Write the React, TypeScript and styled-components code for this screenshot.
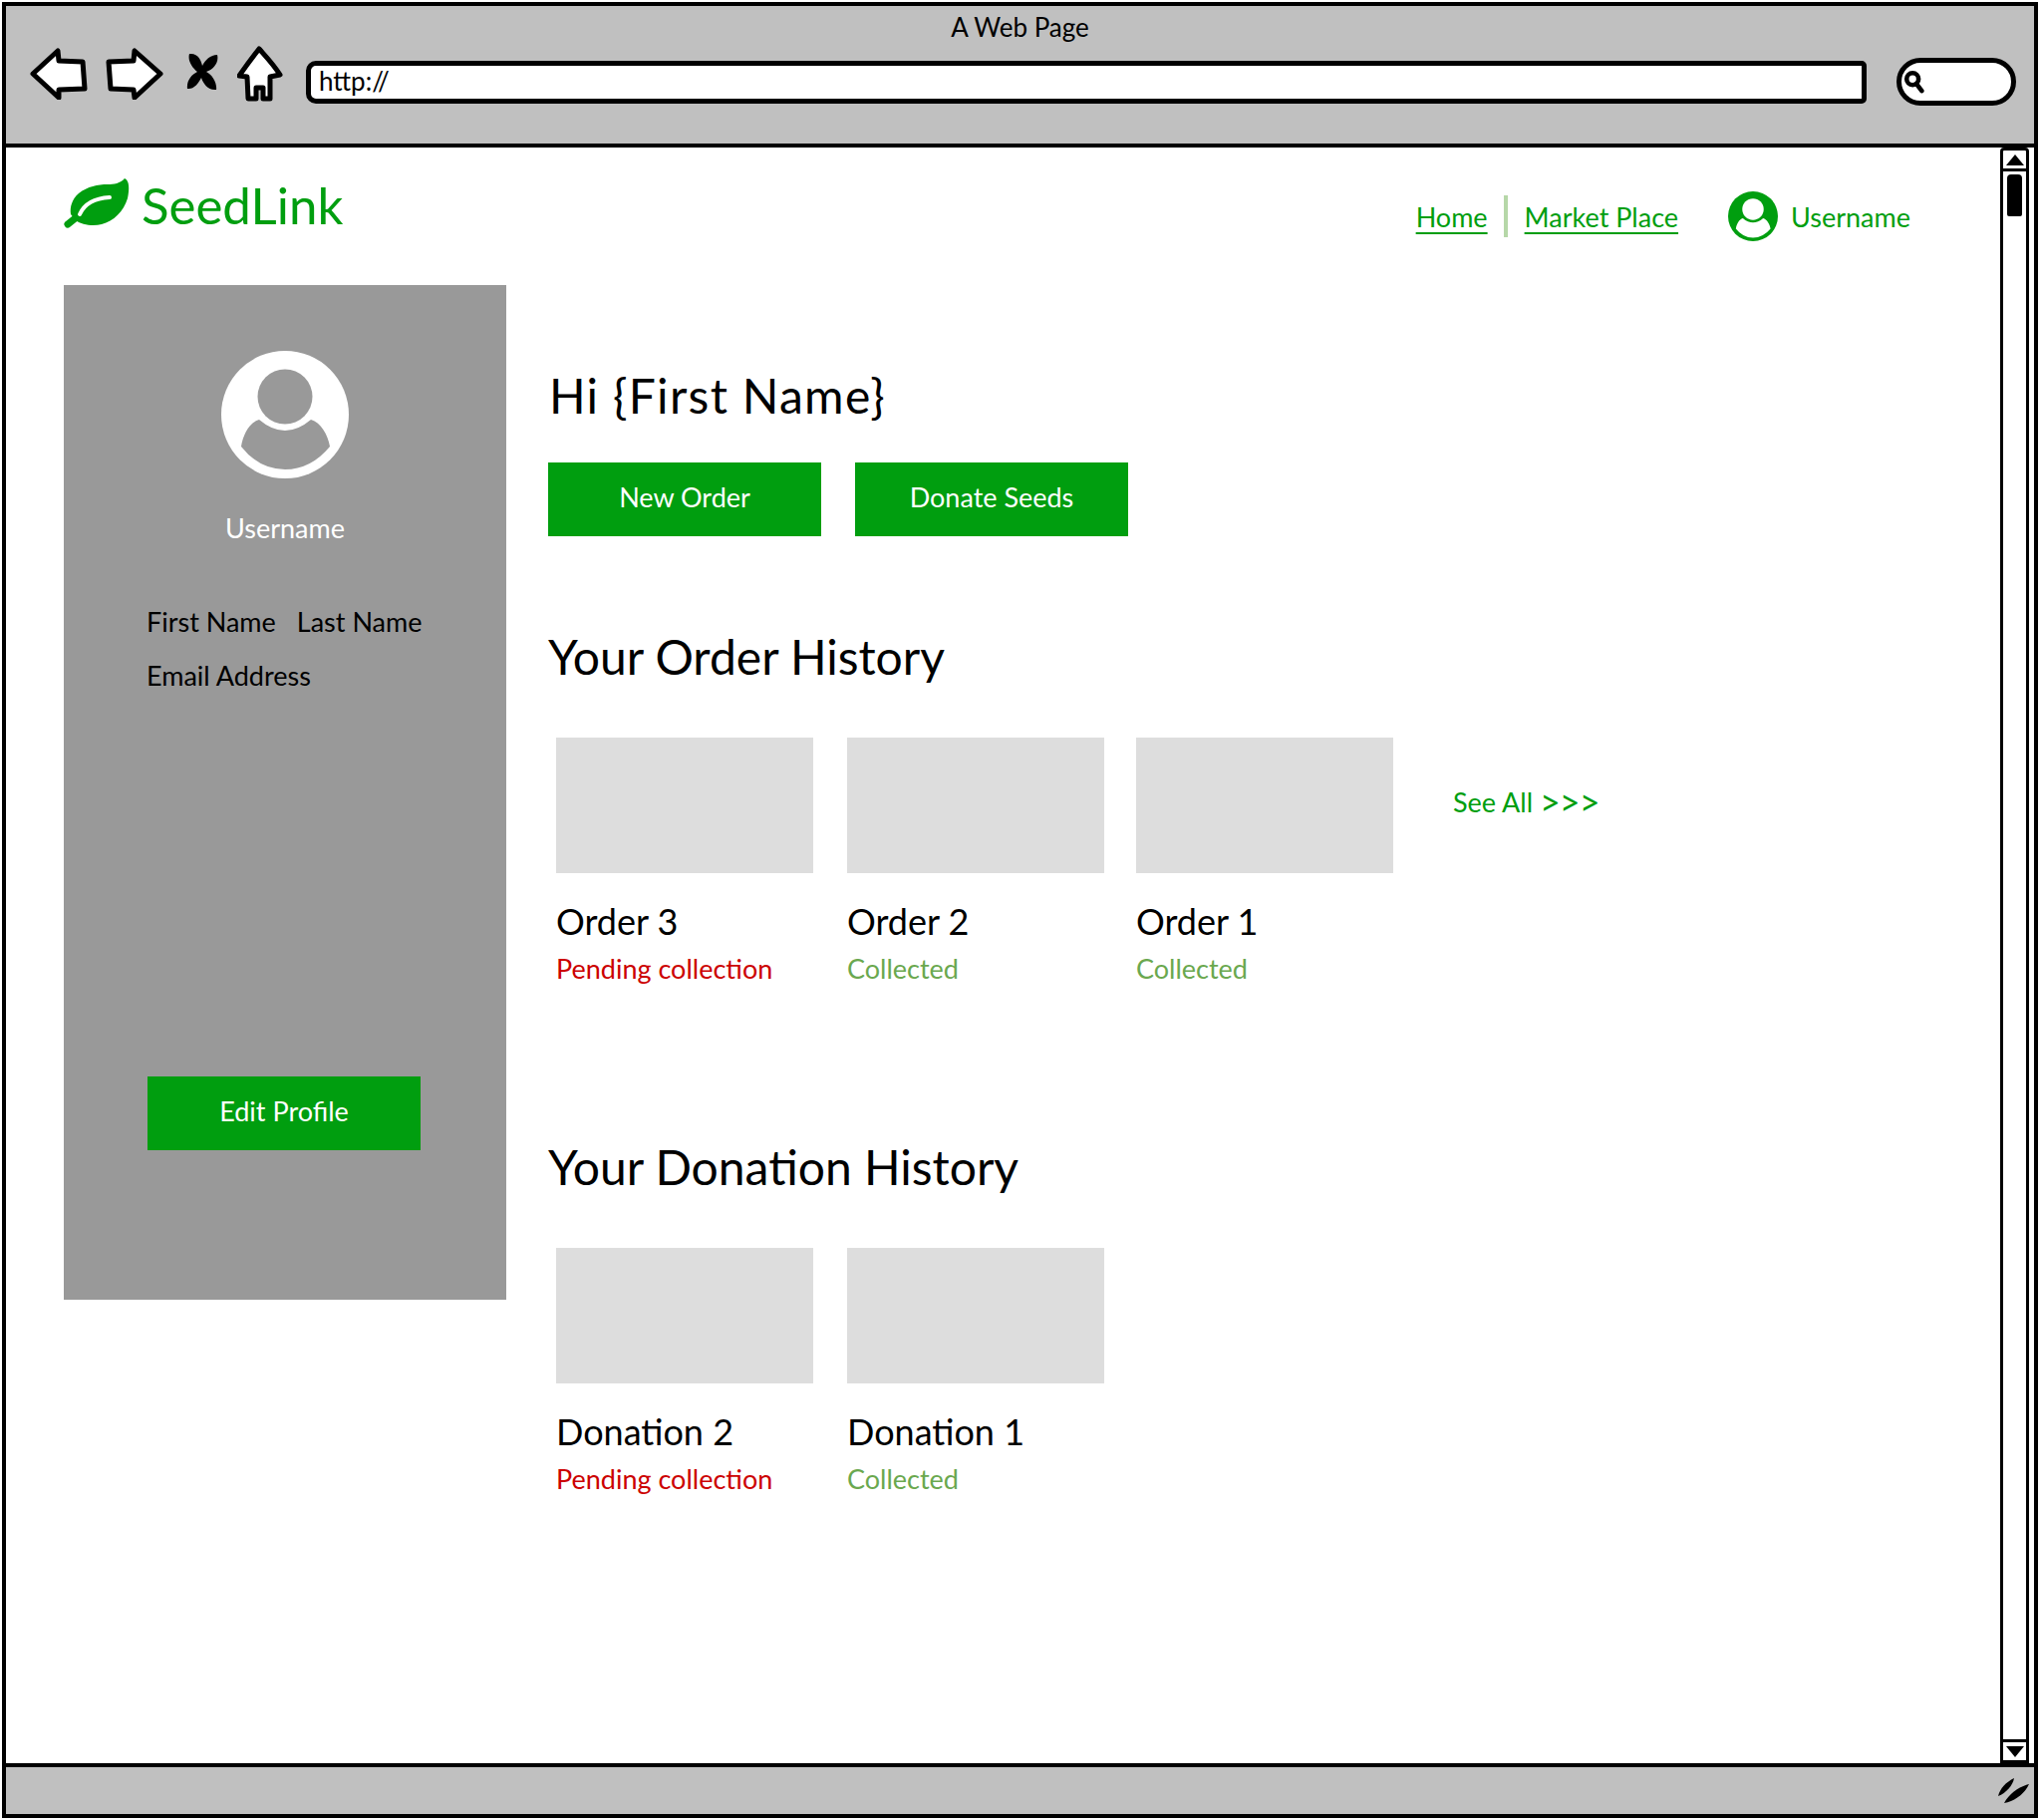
import React from 'react';
import styled, { createGlobalStyle } from 'styled-components';

const GREEN = '#009e0f';

const GlobalStyle = createGlobalStyle`
  html, body {
    margin: 0;
    padding: 0;
    background: #fff;
  }
  body {
    font-family: 'Lato', 'Open Sans', sans-serif;
    color: #000;
  }
`;

const Screen = styled.div`
  width: 2048px;
  height: 1826px;
  box-sizing: border-box;
  padding: 2px 3px 2px 2px;
  overflow: hidden;
`;

const Frame = styled.div`
  height: 100%;
  box-sizing: border-box;
  border: 4px solid #000;
  display: flex;
  flex-direction: column;
`;

const Toolbar = styled.header`
  height: 142px;
  flex: none;
  box-sizing: border-box;
  background: #c0c0c0;
  border-bottom: 4px solid #000;
  display: flex;
  flex-direction: column;
  align-items: center;
`;

const WindowTitle = styled.div`
  height: 44px;
  line-height: 42px;
  font-size: 26px;
`;

const ToolRow = styled.div`
  align-self: stretch;
  display: flex;
  align-items: center;
  height: 52px;
  padding: 0 18px 0 24px;
`;

const ToolIcon = styled.svg<{ $gap: number; $lift: number }>`
  flex: none;
  margin-right: ${(p) => p.$gap}px;
  margin-bottom: ${(p) => p.$lift}px;
`;

const AddressBar = styled.div`
  flex: 1;
  height: 43px;
  margin-top: 12px;
  box-sizing: border-box;
  background: #fff;
  border: 5px solid #000;
  border-radius: 10px 5px 5px 10px;
  padding-left: 8px;
  font-size: 26px;
  line-height: 31px;
`;

const SearchBox = styled.div`
  flex: none;
  width: 120px;
  height: 48px;
  margin: 12px 0 0 30px;
  box-sizing: border-box;
  background: #fff;
  border: 5px solid #000;
  border-radius: 24px;
  display: flex;
  align-items: center;
  padding-left: 2px;
`;

const Content = styled.div`
  flex: 1;
  min-height: 0;
  display: flex;
`;

const Page = styled.main`
  flex: 1;
  background: #fff;
  padding: 24px 0 0 58px;
`;

const Header = styled.div`
  display: flex;
  align-items: flex-start;
  height: 114px;
`;

const Brand = styled.div`
  display: flex;
  align-items: center;
  color: ${GREEN};
  font-size: 51px;
  line-height: 60px;
  gap: 10px;
  margin-top: 3px;

  svg {
    margin-bottom: 8px;
  }
`;

const Nav = styled.nav`
  margin-left: auto;
  margin-right: 90px;
  display: flex;
  align-items: center;
  margin-top: 20px;
  height: 50px;
  color: ${GREEN};
  font-size: 27px;
`;

const NavLink = styled.a`
  color: ${GREEN};
  text-decoration: underline;
  text-underline-offset: 5px;
`;

const NavDivider = styled.span`
  width: 4px;
  height: 42px;
  background: #b6d7a8;
  margin: 0 17px 0 16px;
`;

const NavUser = styled.div`
  display: flex;
  align-items: center;
  margin-left: 50px;
  gap: 13px;
`;

const Body = styled.div`
  display: flex;
  align-items: flex-start;
`;

const Sidebar = styled.aside`
  width: 444px;
  height: 1018px;
  flex: none;
  background: #999;
  box-sizing: border-box;
  padding: 66px 0 0 84px;
  display: flex;
  flex-direction: column;
`;

const SideAvatar = styled.div`
  width: 276px;
  display: flex;
  justify-content: center;
`;

const SideName = styled.div`
  width: 276px;
  text-align: center;
  color: #fff;
  font-size: 27px;
  line-height: 32px;
  margin-top: 34px;
`;

const SideNames = styled.div`
  display: flex;
  gap: 21px;
  font-size: 27px;
  line-height: 32px;
  margin: 62px 0 0 -1px;
`;

const SideEmail = styled.div`
  font-size: 27px;
  line-height: 32px;
  margin: 22px 0 0 -1px;
`;

const GreenButton = styled.button`
  width: 274px;
  height: 74px;
  padding: 0 0 6px;
  border: 0;
  background: ${GREEN};
  color: #fff;
  font-family: inherit;
  font-size: 27px;
`;

const SideButton = styled(GreenButton)`
  margin-top: 386px;
`;

const Main = styled.div`
  flex: 1;
  padding: 84px 0 0 42px;
`;

const Greeting = styled.h1`
  margin: -1px 0 0 1px;
  font-weight: 400;
  font-size: 48px;
  line-height: 56px;
  letter-spacing: 1.3px;
`;

const Actions = styled.div`
  display: flex;
  gap: 34px;
  margin-top: 39px;
`;

const SectionTitle = styled.h2<{ $top: number }>`
  margin: ${(p) => p.$top}px 0 0;
  font-weight: 400;
  font-size: 48px;
  line-height: 56px;
`;

const CardRow = styled.div`
  display: flex;
  align-items: flex-start;
  margin: 53px 0 0 8px;
`;

const Card = styled.div<{ $gap: number }>`
  width: 258px;
  margin-right: ${(p) => p.$gap}px;
`;

const Thumb = styled.div`
  height: 136px;
  background: #ddd;
`;

const CardName = styled.div`
  font-size: 36px;
  line-height: 44px;
  margin-top: 26px;
`;

const CardStatus = styled.div<{ $pending?: boolean }>`
  color: ${(p) => (p.$pending ? '#cc0000' : '#6aa84f')};
  font-size: 27px;
  line-height: 32px;
  margin-top: 10px;
`;

const SeeAll = styled.a`
  color: ${GREEN};
  font-size: 27px;
  line-height: 32px;
  margin: 49px 0 0 28px;
`;

const SeeAllArrows = styled.span`
  font-size: 36px;
  line-height: 0;
  letter-spacing: -1px;
  vertical-align: -3px;
`;

const Scrollbar = styled.div`
  flex: none;
  width: 29px;
  margin: 0 5px 0 0;
  box-sizing: border-box;
  border: 3px solid #000;
  border-radius: 4px 4px 0 0;
  background: #fff;
  display: flex;
  flex-direction: column;
  align-items: center;
`;

const ScrollButton = styled.div<{ $down?: boolean }>`
  align-self: stretch;
  height: 18px;
  flex: none;
  display: flex;
  align-items: center;
  justify-content: center;
  border-${(p) => (p.$down ? 'top' : 'bottom')}: 3px solid #000;
  ${(p) => p.$down && 'margin-top: auto;'}
`;

const ScrollThumb = styled.div`
  width: 15px;
  height: 42px;
  margin-top: 3px;
  background: #000;
  border-radius: 4px 4px 2px 2px;
`;

const StatusBar = styled.footer`
  height: 51px;
  flex: none;
  box-sizing: border-box;
  background: #c0c0c0;
  border-top: 4px solid #000;
  display: flex;
  align-items: center;
  justify-content: flex-end;
  padding-right: 4px;
`;

const Avatar: React.FC<{ size: number; disc: string; figure: string }> = ({
  size,
  disc,
  figure,
}) => (
  <svg width={size} height={size} viewBox="0 0 128 128">
    <circle cx="64" cy="64" r="64" fill={disc} />
    <circle cx="64" cy="46" r="27.5" fill={figure} />
    <path
      d="M38 69Q64 91 90 69C100 72 107 84 109 96Q90 119 64 119Q38 119 20 96C22 84 28 72 38 69Z"
      fill={figure}
    />
  </svg>
);

const LeafLogo = () => (
  <svg width="68" height="54" viewBox="0 0 68 54">
    <path
      d="M61 4C57 9 50 10 44 10C34 10 24 12 15 19C8 25 6 33 7 40L12 46C18 51 30 52 38 50C50 47 60 37 64 24C66 15 66 6 61 4Z"
      fill={GREEN}
    />
    <path d="M4 50L14 42" stroke={GREEN} strokeWidth="7" strokeLinecap="round" />
    <path
      d="M16 40C20 31 28 24 46 23"
      stroke="#fff"
      strokeWidth="4"
      strokeLinecap="round"
      fill="none"
    />
  </svg>
);

const Order: React.FC<{ name: string; status: string; pending?: boolean; gap: number }> = ({
  name,
  status,
  pending,
  gap,
}) => (
  <Card $gap={gap}>
    <Thumb />
    <CardName>{name}</CardName>
    <CardStatus $pending={pending}>{status}</CardStatus>
  </Card>
);

export default function App() {
  return (
    <Screen>
      <GlobalStyle />
      <Frame>
        <Toolbar>
          <WindowTitle>A Web Page</WindowTitle>
          <ToolRow>
            <ToolIcon $gap={18} $lift={4} width="58" height="52" viewBox="0 0 58 52">
              <path
                d="M3 26L28 3L29 13L53 14L55 41L29 42L29 50Z"
                fill="#fff"
                stroke="#000"
                strokeWidth="5"
                strokeLinejoin="round"
              />
            </ToolIcon>
            <ToolIcon $gap={23} $lift={4} width="58" height="52" viewBox="0 0 58 52">
              <path
                d="M55 26L29 3L28 13L3 14L5 41L28 42L29 50Z"
                fill="#fff"
                stroke="#000"
                strokeWidth="5"
                strokeLinejoin="round"
              />
            </ToolIcon>
            <ToolIcon $gap={19} $lift={8} width="32" height="38" viewBox="0 0 32 38">
              <path
                d="M3 1C12 0 15 8 16 13C19 7 24 2 31 2C33 10 27 17 20 19C26 22 31 30 30 37C22 38 17 31 15 25C12 31 7 37 1 36C0 28 5 22 11 19C6 15 1 8 3 1Z"
                fill="#000"
              />
            </ToolIcon>
            <ToolIcon $gap={23} $lift={4} width="46" height="56" viewBox="0 0 46 56">
              <path
                d="M22 3C30 12 36 18 43 29L33 31L33 53L26 53L26 42L19 42L19 53L11 53L10 31L2 30C9 20 15 12 22 3Z"
                fill="#fff"
                stroke="#000"
                strokeWidth="5"
                strokeLinejoin="round"
              />
            </ToolIcon>
            <AddressBar>http://</AddressBar>
            <SearchBox>
              <svg width="22" height="24" viewBox="0 0 24 26">
                <circle cx="10" cy="10" r="6.5" fill="none" stroke="#000" strokeWidth="5" />
                <path d="M14 15L20 23" stroke="#000" strokeWidth="5" strokeLinecap="round" />
              </svg>
            </SearchBox>
          </ToolRow>
        </Toolbar>
        <Content>
          <Page>
            <Header>
              <Brand>
                <LeafLogo />
                SeedLink
              </Brand>
              <Nav>
                <NavLink>Home</NavLink>
                <NavDivider />
                <NavLink>Market Place</NavLink>
                <NavUser>
                  <Avatar size={50} disc={GREEN} figure="#fff" />
                  Username
                </NavUser>
              </Nav>
            </Header>
            <Body>
              <Sidebar>
                <SideAvatar>
                  <Avatar size={128} disc="#fff" figure="#999" />
                </SideAvatar>
                <SideName>Username</SideName>
                <SideNames>
                  <span>First Name</span>
                  <span>Last Name</span>
                </SideNames>
                <SideEmail>Email Address</SideEmail>
                <SideButton>Edit Profile</SideButton>
              </Sidebar>
              <Main>
                <Greeting>Hi {'{First Name}'}</Greeting>
                <Actions>
                  <GreenButton>New Order</GreenButton>
                  <GreenButton>Donate Seeds</GreenButton>
                </Actions>
                <SectionTitle $top={93}>Your Order History</SectionTitle>
                <CardRow>
                  <Order name="Order 3" status="Pending collection" pending gap={34} />
                  <Order name="Order 2" status="Collected" gap={32} />
                  <Order name="Order 1" status="Collected" gap={32} />
                  <SeeAll>
                    See All <SeeAllArrows>&gt;&gt;&gt;</SeeAllArrows>
                  </SeeAll>
                </CardRow>
                <SectionTitle $top={155}>Your Donation History</SectionTitle>
                <CardRow>
                  <Order name="Donation 2" status="Pending collection" pending gap={34} />
                  <Order name="Donation 1" status="Collected" gap={32} />
                </CardRow>
              </Main>
            </Body>
          </Page>
          <Scrollbar>
            <ScrollButton>
              <svg width="18" height="11" viewBox="0 0 18 11">
                <path d="M9 0L18 11L0 11Z" fill="#000" />
              </svg>
            </ScrollButton>
            <ScrollThumb />
            <ScrollButton $down>
              <svg width="18" height="11" viewBox="0 0 18 11">
                <path d="M0 0L18 0L9 11Z" fill="#000" />
              </svg>
            </ScrollButton>
          </Scrollbar>
        </Content>
        <StatusBar>
          <svg width="34" height="28" viewBox="0 0 34 28">
            <path d="M2 19C4 11 10 5 18 1C17 8 10 16 2 19Z" fill="#000" />
            <path d="M8 26C13 17 22 10 33 7C29 16 19 24 8 26Z" fill="#000" />
          </svg>
        </StatusBar>
      </Frame>
    </Screen>
  );
}
